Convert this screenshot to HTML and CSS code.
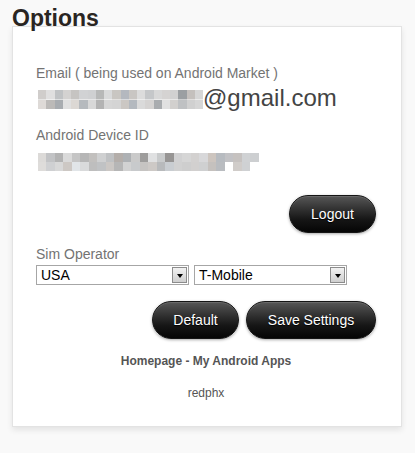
FILE: index.html
```html
<!DOCTYPE html>
<html>
<head>
<meta charset="utf-8">
<link rel="stylesheet" href="styles.css">
</head>
<body>
<div class="page">
  <h1 class="title">Options</h1>
  <div class="card">
    <div class="label">Email ( being used on Android Market )</div>
    <div class="email"><span class="mosaic mosaic-email"></span>@gmail.com</div>
    <div class="label label-device">Android Device ID</div>
    <div class="mosaic mosaic-device"></div>
    <div class="row-right row-logout">
      <button class="btn btn-logout">Logout</button>
    </div>
    <div class="label label-sim">Sim Operator</div>
    <div class="selects">
      <div class="select select-country"><span class="select-text">USA</span><span class="select-arrow"><span class="tri"></span></span></div>
      <div class="select select-carrier"><span class="select-text">T-Mobile</span><span class="select-arrow"><span class="tri"></span></span></div>
    </div>
    <div class="row-right row-actions">
      <button class="btn btn-default">Default</button>
      <button class="btn btn-save">Save Settings</button>
    </div>
    <div class="homepage">Homepage - My Android Apps</div>
    <div class="author">redphx</div>
  </div>
</div>
</body>
</html>
```

FILE: styles.css
```css
html, body {
  margin: 0;
  padding: 0;
  background: #f9f9f9;
}

body {
  font-family: "Liberation Sans", Arial, sans-serif;
  width: 415px;
  height: 453px;
  overflow: hidden;
}

.page {
  padding-left: 12px;
}

.title {
  position: relative;
  z-index: 1;
  margin: 5px 0 -6px 0;
  font-size: 23px;
  line-height: 27px;
  font-weight: bold;
  color: #2a2522;
}

.card {
  width: 340px;
  background: #fff;
  border: 1px solid #e3e3e3;
  box-shadow: 0 3px 6px rgba(0, 0, 0, 0.09);
  padding: 38px 25px 26px 23px;
}

.label {
  font-size: 14px;
  line-height: 16px;
  color: #737373;
}

.email {
  margin-top: 3px;
  font-size: 24px;
  line-height: 27px;
  color: #444;
  white-space: nowrap;
}

.mosaic {
  display: block;
}

.mosaic-email {
  display: inline-block;
  width: 165px;
  height: 19px;
  margin-left: 2px;
  vertical-align: -3px;
  background:
    linear-gradient(to right,
      #d0cdcb 0 5%, #e0dfdf 5% 10%, #c0c2c4 10% 15%, #d4d2d1 15% 20%,
      #c6c4c2 20% 25%, #d1d2d4 25% 30%, #cfd0d2 30% 35%, #b7b8b8 35% 40%,
      #d9dadb 40% 45%, #c9c6c2 45% 50%, #b4b8bf 50% 55%, #c9c6c3 55% 60%,
      #dcdcdc 60% 65%, #c5c7c9 65% 70%, #d8d8d8 70% 75%, #d5d3d2 75% 80%,
      #d1d1d1 80% 85%, #9b9fa2 85% 90%, #c4c0bd 90% 95%, #d6d6d6 95% 100%) top / 100% 50% no-repeat,
    linear-gradient(to right,
      #dedad7 0 5%, #bcbab8 5% 10%, #a8acb0 10% 15%, #e0e0e0 15% 20%,
      #dcd8d4 20% 25%, #b6babe 25% 30%, #d8d8d8 30% 35%, #b3b3b3 35% 40%,
      #d6d6d6 40% 45%, #d4d4d4 45% 50%, #cbc7c3 50% 55%, #b4b9bf 55% 60%,
      #dadada 60% 65%, #d5d3d2 65% 70%, #a9acaf 70% 75%, #e1e1e1 75% 80%,
      #d2d0ce 80% 85%, #bfc1c3 85% 90%, #d0d0d0 90% 95%, #d6d6d6 95% 100%) bottom / 100% 50% no-repeat;
}

.label-device {
  margin-top: 16px;
}

.mosaic-device {
  width: 221px;
  height: 18px;
  margin: 10px 0 0 2px;
  background:
    linear-gradient(to right,
      #dcdad8 0 8.5px, #c2c3c5 8.5px 17px, #b3b3b3 17px 25.5px, #dadada 25.5px 34px,
      #c5c5c5 34px 42.5px, #b6b6b6 42.5px 51px, #c2c0be 51px 59.5px, #cfd0d1 59.5px 68px,
      #bfc1c3 68px 76.5px, #b4aeaa 76.5px 85px, #aeb1b4 85px 93.5px, #cacaca 93.5px 102px,
      #9e9d9c 102px 110.5px, #e0e1e2 110.5px 119px, #c9cbcc 119px 127.5px, #979594 127.5px 136px,
      #d1d1d2 136px 144.5px, #d6d6d6 144.5px 153px, #d3d1d0 153px 161.5px, #d8d8da 161.5px 170px,
      #cdc5bf 170px 178.5px, #b7bbc0 178.5px 187px, #c2c2c5 187px 195.5px, #c6c2c0 195.5px 204px,
      #d0d2d4 204px 212.5px, #cdcfd1 212.5px 221px) top / 100% 50% no-repeat,
    linear-gradient(to right,
      #dedcda 0 8.5px, #cfd0d2 8.5px 17px, #d8d8d8 17px 25.5px, #cdc8c4 25.5px 34px,
      #e1e5e8 34px 42.5px, #d9dadb 42.5px 51px, #bebebe 51px 59.5px, #c0c2c4 59.5px 68px,
      #cbc7c4 68px 76.5px, #b6b6b6 76.5px 85px, #d2d2d2 85px 93.5px, #c8cacc 93.5px 102px,
      #c6c4c2 102px 110.5px, #cdc9c6 110.5px 119px, #b8babc 119px 127.5px, #c9cdd1 127.5px 136px,
      #d1d1d1 136px 144.5px, #cecece 144.5px 153px, #d2d0cf 153px 161.5px, #cfd0d1 161.5px 170px,
      #c5c1be 170px 178.5px, #b9bcc0 178.5px 187px, #ffffff 187px 195.5px, #d0ccc9 195.5px 204px,
      #cfd1d3 204px 212.5px, #ffffff 212.5px 221px) bottom / 100% 50% no-repeat;
}

.row-right {
  display: flex;
  justify-content: flex-end;
  gap: 7px;
}

.row-logout {
  margin-top: 24px;
}

.btn {
  height: 38px;
  padding: 0;
  border: 1px solid #151515;
  border-radius: 19px;
  background: linear-gradient(to bottom, #575757 0%, #333 35%, #161616 65%, #050505 100%);
  box-shadow: 0 1px 3px rgba(0, 0, 0, 0.35), inset 0 1px 0 rgba(255, 255, 255, 0.12);
  color: #fff;
  font-family: "Liberation Sans", Arial, sans-serif;
  font-size: 14px;
  text-shadow: 0 1px 1px #000;
  cursor: pointer;
}

.btn-logout {
  width: 87px;
}

.btn-default {
  width: 87px;
}

.btn-save {
  width: 130px;
}

.label-sim {
  margin-top: 13px;
}

.selects {
  display: flex;
  gap: 5px;
  margin-top: 3px;
}

.select {
  box-sizing: border-box;
  height: 20px;
  border: 1px solid #a6a6a6;
  background: #fff;
  display: flex;
  align-items: center;
  justify-content: space-between;
  padding-left: 4px;
  font-size: 14px;
  color: #000;
}

.select-country {
  width: 153px;
}

.select-carrier {
  width: 153px;
}

.select-arrow {
  box-sizing: border-box;
  width: 15px;
  height: 16px;
  margin-right: 1px;
  border: 1px solid #8c8c8c;
  background: linear-gradient(to bottom, #f2f2f2, #cfcfcf);
  display: flex;
  align-items: center;
  justify-content: center;
}

.tri {
  width: 0;
  height: 0;
  border-left: 3.5px solid transparent;
  border-right: 3.5px solid transparent;
  border-top: 4px solid #000;
  margin-top: 1px;
}

.row-actions {
  margin-top: 16px;
}

.homepage {
  margin-top: 15px;
  text-align: center;
  font-size: 12px;
  line-height: 14px;
  font-weight: bold;
  color: #555;
}

.author {
  margin-top: 18px;
  text-align: center;
  font-size: 12px;
  line-height: 14px;
  color: #555;
}
```
